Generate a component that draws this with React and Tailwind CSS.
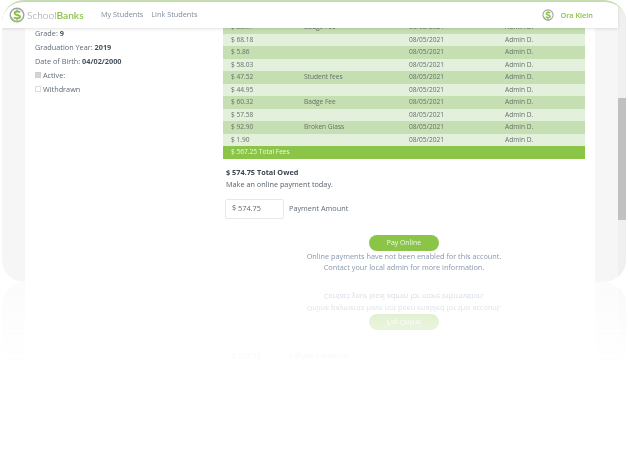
import React from "react";

const rows = [
  { amount: "$ 53.97", note: "Badge Fee" },
  { amount: "$ 68.18", note: "" },
  { amount: "$ 5.86", note: "" },
  { amount: "$ 58.03", note: "" },
  { amount: "$ 47.52", note: "Student fees" },
  { amount: "$ 44.95", note: "" },
  { amount: "$ 60.32", note: "Badge Fee" },
  { amount: "$ 57.58", note: "" },
  { amount: "$ 92.90", note: "Broken Glass" },
  { amount: "$ 1.90", note: "" },
];

const Logo = ({ size }) => (
  <svg width={size} height={size} viewBox="0 0 24 24" className="shrink-0">
    <circle cx="12" cy="12" r="10.2" fill="none" stroke="#a3a3a3" strokeWidth="2.2" />
    <path d="M3 15a10 10 0 0 0 15 5" fill="none" stroke="#9dbf7c" strokeWidth="2.2" />
    <path d="M16.500 8.200c-1-1.600-7.500-2.200-8 .9-.5 3.400 8.300 2.300 8 5.800-.3 3-7.300 2.500-9 .6" fill="none" stroke="#8bc34a" strokeWidth="3" />
    <path d="M12 3.500v3M12 17.500v3" stroke="#8a8a8a" strokeWidth="1.400" />
  </svg>
);

const PaymentRow = () => (
  <div className="flex items-start pl-[2px]">
    <div className="flex h-[20px] w-[59px] items-center rounded-[2px] border border-[#e8e8e8] pl-[6px] text-[7.300px] text-[#5f6a77]">$ 574.75</div>
    <span className="ml-[5px] text-[7.300px] leading-[18px] text-[#5f6a77]">Payment Amount</span>
  </div>
);

const PayBlock = () => (
  <div className="flex flex-col items-center">
    <button className="h-[16px] w-[70px] rounded-full bg-[#8bc548] pt-[1px] text-[6.900px] text-[#f2f8ea]">Pay Online</button>
    <p className="text-[7.300px] leading-[11.500px] text-[#8798ac]">Online payments have not been enabled for this account.</p>
    <p className="text-[7.300px] leading-[11.500px] text-[#8798ac]">Contact your local admin for more information.</p>
  </div>
);

const Screen = () => (
  <div className="flex h-[282px] w-[624px] shrink-0 overflow-hidden rounded-[22px] border-t-2 border-[#c4deb0] bg-[#f6f6f6] font-['Open_Sans',sans-serif] blur-[0.3px]">
    <div className="flex min-w-0 flex-1 flex-col">
      <header className="relative z-10 flex h-[26px] shrink-0 items-center bg-white pl-[7px] pr-[25px] shadow-[0_1px_3px_rgba(0,0,0,0.12)]">
        <Logo size={16} />
        <span className="ml-[2px] w-[56px] font-['Lato',sans-serif] text-[10.200px] font-light leading-none text-[#8f8f8f]">
          School<span className="font-semibold text-[#8bc34a]">Banks</span>
        </span>
        <nav className="ml-[18px] flex gap-[8px] pb-[2px] text-[7.300px] text-[#7f8c9d]">
          <span>My Students</span>
          <span>Link Students</span>
        </nav>
        <div className="ml-auto flex items-center gap-[6px]">
          <Logo size={12} />
          <span className="text-[7.300px] font-semibold text-[#8bc34a]">Ora Klein</span>
        </div>
      </header>

      <div className="mx-[23px] flex min-h-0 flex-1 bg-white">
        <aside className="w-[198px] shrink-0 pl-[10px] text-[7.300px] leading-[14px] text-[#5f6a77]">
          <p className="mt-[-2px] h-[14px]">Grade: <b className="text-[#47515c]">9</b></p>
          <p className="h-[13.700px]">Graduation Year: <b className="text-[#47515c]">2019</b></p>
          <p className="h-[14px]">Date of Birth: <b className="text-[#47515c]">04/02/2000</b></p>
          <p className="flex h-[14px] items-center gap-[2px]">
            <span className="h-[6px] w-[6px] border border-[#cfcfcf] bg-[#d4d4d4]" />
            Active:
          </p>
          <p className="flex h-[14px] items-center gap-[2px]">
            <span className="h-[6px] w-[6px] border border-[#dcdcdc] bg-white" />
            Withdrawn
          </p>
        </aside>

        <main className="w-[362px] shrink-0">
          <div className="text-[6.600px] text-[#66716b]">
            {rows.map((row, i) => (
              <div
                key={row.amount}
                className={`grid h-[12.500px] grid-cols-[73px_105px_96px_1fr] items-center pl-[8px] first:mt-[-7px] ${i % 2 === 0 ? "bg-[#c5dfb2]" : "bg-[#e3f0dc]"}`}
              >
                <span>{row.amount}</span>
                <span>{row.note}</span>
                <span>08/05/2021</span>
                <span>Admin D.</span>
              </div>
            ))}
            <div className="flex h-[12.500px] items-center bg-[#8bc548] pl-[8px] text-[#eef6e4]">$ 567.25 Total Fees</div>
          </div>

          <div className="pt-[7px]">
            <p className="pl-[3px] text-[7.300px] font-bold leading-[12px] text-[#3d4650]">$ 574.75 Total Owed</p>
            <p className="pl-[3px] text-[7.300px] leading-[12px] text-[#56616d]">Make an online payment today.</p>
            <div className="mt-[9px]">
              <PaymentRow />
            </div>
          </div>

          <div className="mt-[16px]">
            <PayBlock />
          </div>
        </main>
      </div>
    </div>

    <div className="w-[8px] shrink-0 bg-[#f0f0f0] pt-[96px]">
      <div className="h-[122px] bg-[#c1c1c1]" />
    </div>
  </div>
);

// mirrored lower part of the window, fading out downwards
const Reflection = () => (
  <div className="flex h-[86px] w-[624px] shrink-0 -scale-y-100 overflow-hidden rounded-b-[22px] bg-[#f6f6f6] font-['Open_Sans',sans-serif] opacity-40 blur-[0.3px] [mask-image:linear-gradient(to_top,black,transparent)]">
    <div className="mx-[23px] flex min-w-0 flex-1 bg-white">
      <div className="w-[198px] shrink-0" />
      <div className="w-[362px] shrink-0 pt-[2px]">
        <PaymentRow />
        <div className="mt-[16px]">
          <PayBlock />
        </div>
      </div>
    </div>
    <div className="w-[8px] shrink-0 bg-[#f0f0f0]" />
  </div>
);

export default function App() {
  return (
    <div className="flex h-[471px] w-[628px] flex-col overflow-hidden bg-white pl-[2px]">
      <Screen />
      <Reflection />
    </div>
  );
}
